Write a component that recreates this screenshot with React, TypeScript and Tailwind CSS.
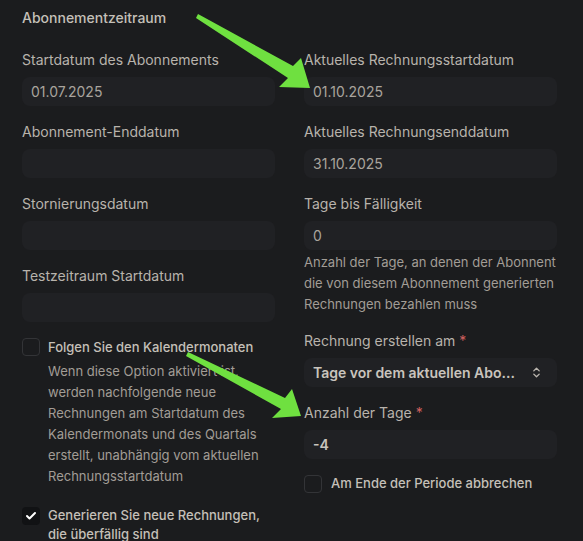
import {ChevronsUpDown, Check} from 'lucide-react';

function Field({label, value, required}: {label: string; value?: string; required?: boolean}) {
  return (
    <div className="flex flex-col">
      <label className="h-5 leading-5 text-[14px] text-[#b8b3ac]">
        {label}
        {required && <span className="ml-1 text-[#d0605f]">*</span>}
      </label>
      <div className="mt-[7px] h-[29px] rounded-lg bg-[#202124] px-[9px] flex items-center text-[14px] text-[#a9a49d]">
        {value}
      </div>
    </div>
  );
}

function Box({checked}: {checked?: boolean}) {
  return checked ? (
    <div className="w-[18px] h-[18px] rounded-[4px] bg-[#111214] flex items-center justify-center shrink-0">
      <Check size={12} strokeWidth={4} className="text-white" />
    </div>
  ) : (
    <div className="w-[18px] h-[18px] rounded-[4px] border border-[#333437] shrink-0" />
  );
}

export default function App() {
  return (
    <div
      className="relative w-[583px] h-[541px] overflow-hidden bg-[#1b1c1e] text-[#b8b3ac]"
      style={{fontFamily: 'Inter, "Noto Sans", sans-serif'}}
    >
      <div className="px-[22px] pt-[8px]">
        <h2 className="h-5 leading-5 text-[14px] font-medium text-[#c5c0b9]">Abonnementzeitraum</h2>

        <div className="mt-[22px] grid grid-cols-[253px_253px] gap-x-[29px]">
          <div className="flex flex-col">
            <Field label="Startdatum des Abonnements" value="01.07.2025" />
            <div className="mt-[16px]">
              <Field label="Abonnement-Enddatum" />
            </div>
            <div className="mt-[16px]">
              <Field label="Stornierungsdatum" />
            </div>
            <div className="mt-[16px]">
              <Field label="Testzeitraum Startdatum" />
            </div>

            <div className="mt-[16px] flex gap-[8px]">
              <Box />
              <div className="flex flex-col">
                <span className="h-[18px] leading-[18px] text-[13px] font-medium text-[#c5c0b9]">
                  Folgen Sie den Kalendermonaten
                </span>
                <p className="mt-[5px] whitespace-nowrap text-[13px] leading-[21px] text-[#a29d96]">
                  Wenn diese Option aktiviert ist,
                  <br />
                  werden nachfolgende neue
                  <br />
                  Rechnungen am Startdatum des
                  <br />
                  Kalendermonats und des Quartals
                  <br />
                  erstellt, unabhängig vom aktuellen
                  <br />
                  Rechnungsstartdatum
                </p>
              </div>
            </div>

            <div className="mt-[20px] flex gap-[8px]">
              <Box checked />
              <span className="-mt-[1px] whitespace-nowrap text-[13px] font-medium leading-[19px] text-[#c5c0b9]">
                Generieren Sie neue Rechnungen,
                <br />
                die überfällig sind
              </span>
            </div>
          </div>

          <div className="flex flex-col">
            <Field label="Aktuelles Rechnungsstartdatum" value="01.10.2025" />
            <div className="mt-[16px]">
              <Field label="Aktuelles Rechnungsenddatum" value="31.10.2025" />
            </div>
            <div className="mt-[16px]">
              <Field label="Tage bis Fälligkeit" value="0" />
            </div>
            <p className="mt-[2px] whitespace-nowrap text-[13px] leading-[21px] text-[#a29d96]">
              Anzahl der Tage, an denen der Abonnent
              <br />
              die von diesem Abonnement generierten
              <br />
              Rechnungen bezahlen muss
            </p>
            <div className="mt-[16px]">
              <div className="flex flex-col">
                <label className="h-5 leading-5 text-[14px] text-[#b8b3ac]">
                  Rechnung erstellen am<span className="ml-1 text-[#d0605f]">*</span>
                </label>
                <div className="mt-[7px] h-[29px] rounded-lg bg-[#202124] pl-[9px] pr-[14px] flex items-center justify-between text-[14px] font-semibold text-[#c9c4bd]">
                  <span>Tage vor dem aktuellen Abo...</span>
                  <ChevronsUpDown size={13} strokeWidth={2.5} className="text-[#bab5ae]" />
                </div>
              </div>
            </div>
            <div className="mt-[16px]">
              <div className="flex flex-col">
                <label className="h-5 leading-5 text-[14px] text-[#b8b3ac]">
                  Anzahl der Tage<span className="ml-1 text-[#d0605f]">*</span>
                </label>
                <div className="mt-[7px] h-[29px] rounded-lg bg-[#202124] px-[9px] flex items-center text-[14px] font-semibold text-[#c9c4bd]">
                  -4
                </div>
              </div>
            </div>
            <div className="mt-[15px] flex items-center gap-[9px]">
              <Box />
              <span className="text-[13px] font-medium text-[#c5c0b9]">Am Ende der Periode abbrechen</span>
            </div>
          </div>
        </div>
      </div>

      <svg className="absolute inset-0 pointer-events-none" width="583" height="541" viewBox="0 0 583 541">
        <polygon
          points="196,18 198,14 293,66 301,58 310,88 279,87 288,78"
          fill="#6fe040"
        />
        <polygon
          points="186,356 188,352 285,398 292,389 301,416 272,418 281,409"
          fill="#6fe040"
        />
      </svg>
    </div>
  );
}
